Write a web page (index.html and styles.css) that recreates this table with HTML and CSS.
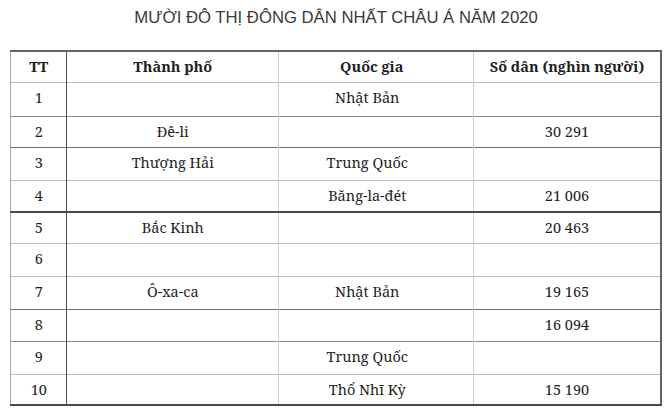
FILE: index.html
```html
<!DOCTYPE html>
<html lang="vi">
<head>
<meta charset="utf-8">
<link rel="stylesheet" href="styles.css">
</head>
<body>
<h1 class="title">MƯỜI ĐÔ THỊ ĐÔNG DÂN NHẤT CHÂU Á NĂM 2020</h1>
<table class="grid">
  <colgroup>
    <col class="w-tt">
    <col class="w-city">
    <col class="w-country">
    <col class="w-pop">
  </colgroup>
  <thead>
    <tr class="head">
      <th>TT</th>
      <th>Thành phố</th>
      <th class="c-country">Quốc gia</th>
      <th>Số dân (nghìn người)</th>
    </tr>
  </thead>
  <tbody>
    <tr class="h34 b-med"><td>1</td><td></td><td class="c-country">Nhật Bản</td><td></td></tr>
    <tr class="h31 b-dk"><td>2</td><td>Đê-li</td><td></td><td>30 291</td></tr>
    <tr class="h33 b-lt"><td>3</td><td>Thượng Hải</td><td class="c-country">Trung Quốc</td><td></td></tr>
    <tr class="h32 b-xdk"><td>4</td><td></td><td class="c-country">Băng-la-đét</td><td>21 006</td></tr>
    <tr class="h31 b-lt"><td>5</td><td>Bắc Kinh</td><td></td><td>20 463</td></tr>
    <tr class="h33 b-lt"><td>6</td><td></td><td></td><td></td></tr>
    <tr class="h33 b-dk"><td>7</td><td>Ô-xa-ca</td><td class="c-country">Nhật Bản</td><td>19 165</td></tr>
    <tr class="h32 b-med"><td>8</td><td></td><td></td><td>16 094</td></tr>
    <tr class="h33 b-lt"><td>9</td><td></td><td class="c-country">Trung Quốc</td><td></td></tr>
    <tr class="h31 b-xdk"><td>10</td><td></td><td class="c-country">Thổ Nhĩ Kỳ</td><td>15 190</td></tr>
  </tbody>
</table>
</body>
</html>
```

FILE: styles.css
```css
html, body {
  margin: 0;
  padding: 0;
  background: #ffffff;
}

.title {
  margin: 0;
  padding-top: 8px;
  height: 50px;
  box-sizing: border-box;
  font-family: "Liberation Sans", Arial, sans-serif;
  font-weight: normal;
  font-size: 16.7px;
  line-height: 19px;
  color: #3a3a3a;
  text-align: center;
}

.grid {
  width: 650px;
  margin: 0 auto;
  border-collapse: collapse;
  table-layout: fixed;
  font-family: "Noto Serif", serif;
  font-size: 14.5px;
  color: #1e1e1e;
  border-left: 1px solid #a8a8a8;
  border-right: 2px solid #666;
}

.w-tt { width: 56px; }
.w-city { width: 212px; }
.w-country { width: 195px; }
.w-pop { width: 187px; }

.grid th,
.grid td {
  font-family: "Noto Serif", serif;
  padding: 0;
  text-align: center;
  vertical-align: top;
  line-height: 18px;
  border-left: 1px solid #cfcfcf;
  white-space: nowrap;
}

.grid th {
  font-weight: bold;
  padding-top: 5px;
}

.grid td {
  padding-top: 5px;
}

.grid .c-country { padding-right: 18px; }
.grid th.c-country { padding-right: 9px; }

.grid tr > :nth-child(2) {
  border-left: 1px solid #4e4e4e;
}

.grid tr > :first-child {
  border-left: 1px solid #a8a8a8;
}

.head {
  height: 31px;
  border-top: 2px solid #666;
  border-bottom: 1px solid #bdbdbd;
}

.h31 { height: 31px; }
.h32 { height: 32px; }
.h33 { height: 33px; }
.h34 { height: 34px; }

.b-lt { border-bottom: 1px solid #bdbdbd; }
.b-med { border-bottom: 1px solid #8a8a8a; }
.b-dk { border-bottom: 1px solid #6e6e6e; }
.b-xdk { border-bottom: 2px solid #4a4a4a; }
```
